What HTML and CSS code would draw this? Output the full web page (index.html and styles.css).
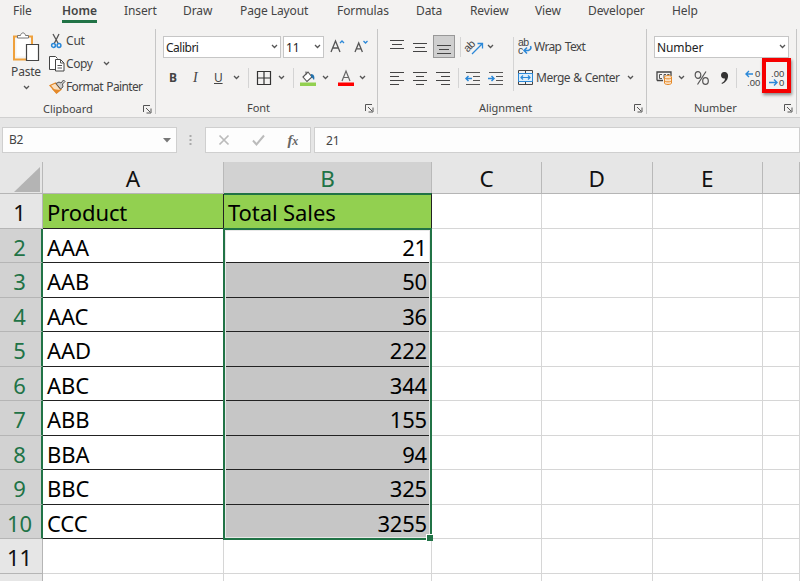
FILE: index.html
```html
<!DOCTYPE html>
<html lang="en">
<head>
<meta charset="utf-8">
<title>Total Sales</title>
<link rel="stylesheet" href="styles.css">
</head>
<body>
<svg class="defs" width="0" height="0">
  <symbol id="chev" viewBox="0 0 7 5"><path d="M1 1l2.500 2.500L6 1" fill="none" stroke="#555" stroke-width="1.300"/></symbol>
  <symbol id="launch" viewBox="0 0 9 9"><path d="M.5 7V.5H7M3 3l4 4M8 3.500V8H3.500" fill="none" stroke="#555"/></symbol>
</svg>
<header class="ribbon">
  <nav class="tabs">
    <span>File</span><span class="active">Home</span><span>Insert</span><span>Draw</span><span>Page Layout</span><span>Formulas</span><span>Data</span><span>Review</span><span>View</span><span>Developer</span><span>Help</span>
  </nav>
  <div class="groups">
    <section class="group clipboard">
      <div class="tools">
        <div class="paste">
          <svg width="28" height="30" viewBox="0 0 28 30"><path d="M2 4.500h18v23H2z" fill="#f5f4f2" stroke="#efa13d" stroke-width="2"/><path d="M4.500 6.500h13v18h-13z" fill="#fff"/><path d="M5.500 6V3.500h3C9 0 13 0 13.500 3.500h3V6z" fill="#fff" stroke="#777"/><path d="M14.500 12.500h12v16h-12z" fill="#fff" stroke="#444" stroke-width="1.200"/></svg>
          <span>Paste</span>
          <svg class="chev" width="7" height="5"><use href="#chev"/></svg>
        </div>
        <div class="cliplist">
          <div><svg width="17" height="16" viewBox="0 0 17 16"><path d="M4 1l5.500 10M10 1L5 11" fill="none" stroke="#555" stroke-width="1.300"/><circle cx="4.500" cy="12.500" r="1.900" fill="none" stroke="#2b88d8" stroke-width="1.500"/><circle cx="10" cy="12.500" r="1.900" fill="none" stroke="#2b88d8" stroke-width="1.500"/></svg><span>Cut</span></div>
          <div><svg width="17" height="16" viewBox="0 0 17 16"><path d="M6 13.500H.5V.5h6l2 2" fill="#fff" stroke="#444"/><path d="M6.500 3.500h5l3.500 3.500v8H6.500z" fill="#fff" stroke="#444"/><path d="M11.500 3.500V7H15M8.500 9.500h4.500M8.500 12h4.500" fill="none" stroke="#555"/></svg><span class="w-copy">Copy</span><svg class="chev" width="7" height="5"><use href="#chev"/></svg></div>
          <div><svg width="17" height="16" viewBox="0 0 17 16"><path d="M1 6.500L6.500 4l5.500 6.500L7.500 14z" fill="#f9dfc0" stroke="#e58a2a" stroke-width="1.300"/><path d="M3 10l4.500 4.500 4-3.500z" fill="#e58a2a"/><path d="M7 4.500l3-1.500L12 4l2.500-3L16 2.500 13.500 5l.5 3-2.500 2z" fill="#ccc" stroke="#555"/></svg><span class="w-fp">Format Painter</span></div>
        </div>
      </div>
      <footer><span>Clipboard</span><svg width="9" height="9"><use href="#launch"/></svg></footer>
    </section>

    <section class="group font">
      <div class="tools">
        <div class="row r1">
          <div class="box fontname"><span>Calibri</span><svg width="7" height="5"><use href="#chev"/></svg></div>
          <div class="box fontsize"><span>11</span><svg width="7" height="5"><use href="#chev"/></svg></div>
          <svg width="16" height="16" viewBox="0 0 16 16"><path d="M1 13L5.500 2 10 13M2.600 9h5.800" fill="none" stroke="#555" stroke-width="1.300"/><path d="M10 4l2-2 2 2" fill="none" stroke="#2b88d8" stroke-width="1.300"/></svg>
          <svg width="16" height="16" viewBox="0 0 16 16"><path d="M1 13L4.700 4l3.700 9M2.300 9.800h4.800" fill="none" stroke="#555" stroke-width="1.300"/><path d="M9.500 2l2 2 2-2" fill="none" stroke="#2b88d8" stroke-width="1.300"/></svg>
        </div>
        <div class="row r2">
          <b>B</b><i>I</i><u>U</u><svg width="7" height="5"><use href="#chev"/></svg><hr>
          <svg width="16" height="16" viewBox="0 0 16 16"><path d="M1.500 1.500h13v13h-13zM8 1v14M1 8h14" fill="none" stroke="#333" stroke-width="1.200"/></svg>
          <svg width="7" height="5"><use href="#chev"/></svg><hr>
          <svg width="16" height="16" viewBox="0 0 16 16"><path d="M3 7l5-5 4 5-5 4.500zM6 1.500V5" fill="#fff" stroke="#555" stroke-width="1.100"/><path d="M11 4c3 0 4 3 3 6-1-1-1.500-2.500-3-3z" fill="#2372ad"/><path d="M0 12.500h16V16H0z" fill="#92d050"/></svg>
          <svg width="7" height="5"><use href="#chev"/></svg>
          <svg width="16" height="16" viewBox="0 0 16 16"><path d="M4 11L8 1l4 10M5.300 7.500h5.400" fill="none" stroke="#666" stroke-width="1.200"/><path d="M0 12.500h16V16H0z" fill="red"/></svg>
          <svg width="7" height="5"><use href="#chev"/></svg>
        </div>
      </div>
      <footer><span>Font</span><svg width="9" height="9"><use href="#launch"/></svg></footer>
    </section>

    <section class="group align">
      <div class="tools">
        <div class="row r1">
          <svg width="14" height="16" viewBox="0 0 14 16"><path d="M0 1.500h14M2 5.500h10M0 9.500h14" stroke="#444"/></svg>
          <svg width="14" height="16" viewBox="0 0 14 16"><path d="M0 4.500h14M2 8.500h10M0 12.500h14" stroke="#444"/></svg>
          <span class="pressed"><svg width="14" height="16" viewBox="0 0 14 16"><path d="M0 6.500h14M2 10.500h10M0 14.500h14" stroke="#444"/></svg></span>
          <hr>
          <svg width="17" height="16" viewBox="0 0 17 16"><text class="glyph" x="-2" y="9" font-size="11" transform="rotate(-45 5 8)">ab</text><path d="M5 15L15 5M10.500 4.500H15.500V9.500" fill="none" stroke="#2b88d8" stroke-width="1.300"/></svg>
          <svg width="7" height="5"><use href="#chev"/></svg>
          <hr class="tall1">
          <svg width="15" height="17" viewBox="0 0 15 17"><text class="glyph" x="0" y="7.500" font-size="10.500">ab</text><text class="glyph" x="0" y="15.500" font-size="10.500">c</text><path d="M12.500 8c1.500 3-1 5-6 4.500M9 9.500L6 12.500l3 3" fill="none" stroke="#2b88d8" stroke-width="1.500"/></svg>
          <span class="w-wrap">Wrap Text</span>
        </div>
        <div class="row r2">
          <svg width="14" height="14" viewBox="0 0 14 14"><path d="M0 1.500h14M0 5.500h9M0 9.500h14M0 13.500h9" stroke="#444"/></svg>
          <svg width="14" height="14" viewBox="0 0 14 14"><path d="M0 1.500h14M3 5.500h8M0 9.500h14M3 13.500h8" stroke="#444"/></svg>
          <svg width="14" height="14" viewBox="0 0 14 14"><path d="M0 1.500h14M5 5.500h9M0 9.500h14M5 13.500h9" stroke="#444"/></svg>
          <hr>
          <svg width="15" height="14" viewBox="0 0 15 14"><path d="M1 1.500h14M8 5.500h7M8 9.500h7M1 13.500h14" stroke="#555"/><path d="M1 7.500h6M3.500 5L1 7.500 3.500 10" fill="none" stroke="#2b88d8" stroke-width="1.500"/></svg>
          <svg width="15" height="14" viewBox="0 0 15 14"><path d="M1 1.500h14M8 5.500h7M8 9.500h7M1 13.500h14" stroke="#555"/><path d="M0 7.500h6M3.500 5L6 7.500 3.500 10" fill="none" stroke="#2b88d8" stroke-width="1.500"/></svg>
          <hr class="tall2">
          <svg width="15" height="15" viewBox="0 0 15 15"><path d="M.5.500h14v14H.5zM7.500 0v3M7.500 12v3" fill="none" stroke="#444"/><path d="M.5 3.500h14v8H.5z" fill="#deeffa" stroke="#2b88d8"/><path d="M3 7.500h9M5 5.500l-2 2 2 2M10 5.500l2 2-2 2" fill="none" stroke="#2b88d8" stroke-width="1.200"/></svg>
          <span class="w-merge">Merge &amp; Center</span>
          <svg width="7" height="5"><use href="#chev"/></svg>
        </div>
      </div>
      <footer><span>Alignment</span><svg width="9" height="9"><use href="#launch"/></svg></footer>
    </section>

    <section class="group number">
      <div class="tools">
        <div class="row r1"><div class="box format"><span>Number</span><svg width="7" height="5"><use href="#chev"/></svg></div></div>
        <div class="row r2">
          <svg width="17" height="15" viewBox="0 0 17 15"><path d="M1 10.500V2h14v4M1 10.500h6" fill="none" stroke="#444" stroke-width="1.300"/><path d="M6 4.500H3.500v4H6M10 4.500H8v4M13.500 4.500h-2V6" fill="none" stroke="#555"/><path d="M8.500 7v6c0 2 7 2 7 0V7c0-2-7-2-7 0z" fill="#fbe3c8" stroke="#e58a2a"/><path d="M8.500 7.500c0 1.800 7 1.800 7 0M8.500 10.500c0 1.800 7 1.800 7 0" fill="none" stroke="#e58a2a"/></svg>
          <svg width="7" height="5"><use href="#chev"/></svg>
          <svg width="16" height="16" viewBox="0 0 16 16"><g fill="none" stroke="#555" stroke-width="1.200"><ellipse cx="4" cy="5" rx="2.800" ry="3.400"/><ellipse cx="11.500" cy="11" rx="2.800" ry="3.400"/><path d="M12 1.500l-8.500 13"/></g></svg>
          <svg width="9" height="14" viewBox="0 0 9 14"><path d="M4 1c3 0 4.500 2 4 5-.5 3-2.500 5.500-6 7l-.5-1C3.500 11 5 9.500 5 7.500 2.500 8 1 6.500 1 4.300 1 2.300 2.200 1 4 1z" fill="#333"/></svg>
          <hr>
          <svg width="16" height="18" viewBox="0 0 16 18"><text class="glyph num" x="10" y="8">0</text><text class="glyph num" x="2" y="17">.00</text><path d="M1 5h7M4 2L1 5l3 3" fill="none" stroke="#2b88d8" stroke-width="1.400"/></svg>
          <span class="marked"><svg width="15" height="18" viewBox="0 0 15 18"><text class="glyph num" x="2" y="8">.00</text><text class="glyph num" x="10" y="17">0</text><path d="M0 13.500h8M5 10.500l3 3-3 3" fill="none" stroke="#2b88d8" stroke-width="1.400"/></svg></span>
        </div>
      </div>
      <footer><span>Number</span><svg width="9" height="9"><use href="#launch"/></svg></footer>
    </section>
  </div>
</header>

<div class="formulabar">
  <div class="namebox"><span>B2</span><svg width="8" height="5"><path d="M0 0h8L4 4.500z" fill="#777"/></svg></div>
  <svg class="dots" width="3" height="12"><path d="M.5 1h2v2h-2zM.5 5h2v2h-2zM.5 9h2v2h-2z" fill="#aaa"/></svg>
  <div class="fx">
    <svg width="12" height="12" viewBox="0 0 12 12"><path d="M1.500 1.500l9 9M10.500 1.500l-9 9" stroke="#bbb" stroke-width="1.700"/></svg>
    <svg width="13" height="12" viewBox="0 0 13 12"><path d="M1 6.500l3.500 4L12 1.500" fill="none" stroke="#bbb" stroke-width="2"/></svg>
    <em>f<small>x</small></em>
  </div>
  <div class="formula">21</div>
</div>

<main class="sheet">
  <div class="colheads"><div class="corner"><svg width="26" height="25"><path d="M26 0v25H0z" fill="#b4b4b4"/></svg></div><div>A</div><div class="sel">B</div><div>C</div><div>D</div><div>E</div><div></div></div>
  <div class="line head"><b>1</b><span>Product</span><span>Total Sales</span><i></i><i></i><i></i><i></i></div>
  <div class="line data first"><b>2</b><span>AAA</span><span>21</span><i></i><i></i><i></i><i></i></div>
  <div class="line data"><b>3</b><span>AAB</span><span>50</span><i></i><i></i><i></i><i></i></div>
  <div class="line data"><b>4</b><span>AAC</span><span>36</span><i></i><i></i><i></i><i></i></div>
  <div class="line data"><b>5</b><span>AAD</span><span>222</span><i></i><i></i><i></i><i></i></div>
  <div class="line data"><b>6</b><span>ABC</span><span>344</span><i></i><i></i><i></i><i></i></div>
  <div class="line data"><b>7</b><span>ABB</span><span>155</span><i></i><i></i><i></i><i></i></div>
  <div class="line data"><b>8</b><span>BBA</span><span>94</span><i></i><i></i><i></i><i></i></div>
  <div class="line data"><b>9</b><span>BBC</span><span>325</span><i></i><i></i><i></i><i></i></div>
  <div class="line data"><b>10</b><span>CCC</span><span>3255</span><i></i><i></i><i></i><i></i></div>
  <div class="line"><b>11</b><span></span><span></span><i></i><i></i><i></i><i></i></div>
  <div class="line"><b></b><span></span><span></span><i></i><i></i><i></i><i></i></div>
  <div class="selection"></div>
</main>
</body>
</html>
```
FILE: styles.css
```css
* { box-sizing: border-box; }
body { margin: 0; width: 800px; height: 581px; overflow: hidden; background: #e6e6e6; font: 12px/16px "Noto Sans", "Open Sans", sans-serif; color: #444; letter-spacing: -.2px; white-space: nowrap; }
.defs { position: absolute; }
svg { display: block; flex: none; overflow: visible; }
.glyph { fill: #444; letter-spacing: -.5px; font-family: "Liberation Sans", sans-serif; }
.num { font-size: 9.5px; letter-spacing: 0; }
hr { border: 0; margin: 0; width: 1px; height: 20px; background: #d4d4d4; }

.ribbon { height: 118px; background: #f3f2f1; border-bottom: 1px solid #d0d0d0; }
.tabs { display: grid; grid-template-columns: 49px 62px 59px 57px 97px 79px 54px 65px 53px 84px 60px; height: 28px; padding: 3px 0 0 13px; letter-spacing: -.1px; }
.tabs span { justify-self: start; height: 20px; }
.tabs .active { font-weight: 600; border-bottom: 3px solid #217346; letter-spacing: 0; }
.groups { display: flex; height: 89px; }
.group { height: 85px; margin-top: 1px; border-right: 1px solid #c6c6c6; display: flex; flex-direction: column; }
.clipboard { width: 156px; }
.font { width: 222px; }
.align { width: 269px; }
.number { width: 150px; }
.tools { height: 72px; }
footer { display: flex; align-items: center; justify-content: space-between; padding-right: 3px; font-size: 11px; height: 16px; margin-top: 1px; letter-spacing: -.05px; }
footer span { position: relative; top: 1px; }
footer svg { position: relative; top: 1px; }
.clipboard footer { padding-left: 43px; }
.font footer { padding-left: 91px; }
.align footer { padding-left: 101px; }
.number footer { padding-left: 47px; }
.groups footer { flex: none; transform: translateY(1px); }

.clipboard .tools { display: flex; }
.paste { width: 49px; padding: 3px 0 0 3px; display: flex; flex-direction: column; align-items: center; }
.paste span { margin-top: 2px; }
.paste .chev { margin-top: 5px; }
.cliplist div { height: 23px; display: flex; align-items: center; }
.cliplist .chev { margin-left: 10px; }
.w-fp { letter-spacing: -.65px; word-spacing: 1px; }
.w-copy { letter-spacing: -.4px; }
.w-wrap { letter-spacing: -.65px; word-spacing: 1px; }
.w-merge { letter-spacing: -.5px; word-spacing: .5px; }

.row { display: grid; align-items: center; }
.r1 { height: 35px; grid-template-rows: 35px; }
.r2 { height: 27px; grid-template-rows: 27px; }
.r1 > *, .r2 > * { justify-self: start; }
.box { display: flex; align-items: center; justify-content: space-between; height: 22px; background: #fff; border: 1px solid #c6c6c6; padding: 0 2px; color: #222; }
.box span { position: relative; top: 1px; }
.fontname { width: 118px; letter-spacing: -.5px; }
.fontsize { width: 41px; }
.font .r1 { grid-template-columns: 120px 47px 24px 20px; padding-left: 7px; }
.font .r2 { grid-template-columns: 24px 21px 19px 15px 8px 22px 15px 7px 22px 16px 21px 10px; padding-left: 13px; }
.font i { font-family: "Liberation Serif", serif; font-size: 14px; }
.align .r1 { grid-template-columns: 23px 20px 27px 7px 20px 26px 5px 16px 60px; padding-left: 12px; }
.align .r2 { grid-template-columns: 23px 23px 22px 7px 23px 25px 5px 18px 91px 10px; padding-left: 12px; }
.tall1 { height: 27px; align-self: end; }
.tall2 { height: 27px; }
.pressed { width: 22px; height: 23px; padding: 3px 3px; background: #cfcfcf; border: 1px solid #989898; }
.number .r1 { padding-left: 7px; }
.format { width: 135px; letter-spacing: -.1px; }
.number .r2 { grid-template-columns: 22px 16px 26px 16px 9px 17px 30px; padding-left: 9px; }
.marked { width: 29px; height: 35px; border: 4px solid #f60000; padding: 7px 3px; box-shadow: 1px 2px 3px #888; margin-top: -5px; }

.formulabar { display: flex; height: 44px; padding: 9px 0 0 2px; }
.formulabar > div { height: 26px; background: #fdfdfd; border: 1px solid #cfcfcf; }
.namebox { width: 175px; padding: 0 5px 0 6px; display: flex; align-items: center; justify-content: space-between; letter-spacing: -.4px; }
.dots { margin: 7px 13px 0 12px; }
.fx { width: 106px; padding: 0 12px; display: flex; align-items: center; justify-content: space-between; }
.fx em { font: italic bold 15px/20px "Liberation Serif", serif; color: #666; }
.fx small { font-size: 12px; }
.formula { flex: 1; margin-left: 3px; padding: 5px 11px; }

.sheet { position: relative; height: 419px; font: 22px/32px "Noto Sans", sans-serif; color: #111; letter-spacing: -.1px; overflow: hidden; }
.colheads, .line { display: grid; grid-template-columns: 43px 181px 208px 110px 110.5px 110.5px 37px; }
.colheads { height: 32px; grid-template-rows: 31px; border-bottom: 1px solid #b5b5b5; text-align: center; }
.colheads > div { border-right: 1px solid #b9b9b9; font-size: 22.5px; line-height: 34px; }
.colheads .corner { padding: 5px 0 0 14px; }
.colheads .sel { background: #d2d2d2; color: #217346; }
.line { height: 34.56px; grid-template-rows: 34.56px; }
.line > * { border-right: 1px solid #d6d6d6; border-bottom: 1px solid #d6d6d6; background: #fff; font-weight: 400; }
.line > b { background: #e6e6e6; border-color: #b5b5b5; text-align: center; line-height: 36px; padding-right: 3px; }
.line > span { padding: 0 4px; line-height: 36px; color: #000; }
.head > span { background: #92d050; border-color: #222; }
.data > b { background: #d2d2d2; color: #217346; border-right: 2px solid #217346; padding-right: 2px; }
.data > span { border-bottom-color: #222; }
.data > span:nth-child(3) { background: #c6c6c6; text-align: right; letter-spacing: -.2px; }
.first > span:nth-child(3) { background: #fff; }
.head > span:nth-child(3) { border-top: 2px solid #217346; margin-top: -1px; line-height: 35px; }
.selection { position: absolute; left: 223px; top: 66px; width: 209px; height: 312px; border: 2px solid #217346; box-shadow: inset 0 0 0 1px #e8e8e8; }
.selection::after { content: ""; position: absolute; right: -3px; bottom: -3px; width: 6px; height: 6px; background: #217346; border: 1px solid #fff; border-width: 1px 0 0 1px; }
```
